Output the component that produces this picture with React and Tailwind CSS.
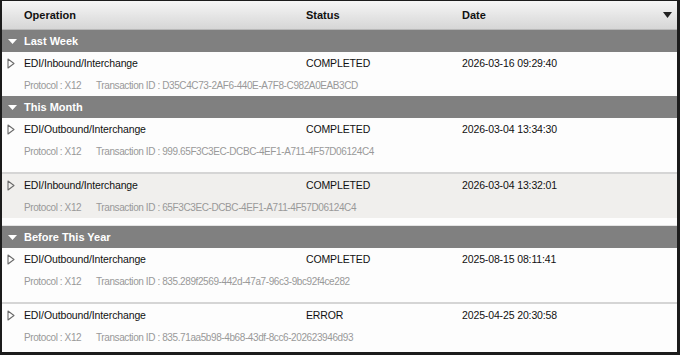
import React from 'react';

const groups = [
  {
    title: 'Last Week',
    rows: [
      {
        op: 'EDI/Inbound/Interchange',
        status: 'COMPLETED',
        date: '2026-03-16 09:29:40',
        tx: 'D35C4C73-2AF6-440E-A7F8-C982A0EAB3CD',
      },
    ],
  },
  {
    title: 'This Month',
    rows: [
      {
        op: 'EDI/Outbound/Interchange',
        status: 'COMPLETED',
        date: '2026-03-04 13:34:30',
        tx: '999.65F3C3EC-DCBC-4EF1-A711-4F57D06124C4',
      },
      {
        op: 'EDI/Inbound/Interchange',
        status: 'COMPLETED',
        date: '2026-03-04 13:32:01',
        tx: '65F3C3EC-DCBC-4EF1-A711-4F57D06124C4',
        shaded: true,
      },
    ],
  },
  {
    title: 'Before This Year',
    rows: [
      {
        op: 'EDI/Outbound/Interchange',
        status: 'COMPLETED',
        date: '2025-08-15 08:11:41',
        tx: '835.289f2569-442d-47a7-96c3-9bc92f4ce282',
      },
      {
        op: 'EDI/Outbound/Interchange',
        status: 'ERROR',
        date: '2025-04-25 20:30:58',
        tx: '835.71aa5b98-4b68-43df-8cc6-202623946d93',
      },
    ],
  },
];

const RowArrow = () => (
  <svg width="8" height="11" viewBox="0 0 8 11" className="block">
    <path d="M1 1 L7 5.5 L1 10 Z" fill="none" stroke="#6b6b6b" strokeWidth="1.1" strokeLinejoin="round" />
  </svg>
);

const GroupArrow = () => (
  <svg width="9" height="5" viewBox="0 0 9 5" className="block">
    <path d="M0 0 L9 0 L4.5 5 Z" fill="#ffffff" />
  </svg>
);

const Row = ({ row, spaced }) => (
  <div
    className={`${row.shaded ? 'bg-[#f0efed]' : 'bg-[#fdfdfd]'} ${
      spaced ? 'border-b-2 border-[#d5d5d5] pb-[10px]' : ''
    }`}
  >
    <div className="flex h-[22px] items-center pt-[1px] text-[10.5px] tracking-[-0.13px] text-[#111]">
      <div className="flex w-[22px] shrink-0 justify-start pl-[5px]">
        <RowArrow />
      </div>
      <div className="w-[282px] shrink-0">{row.op}</div>
      <div className="w-[156px] shrink-0">{row.status}</div>
      <div>{row.date}</div>
    </div>
    <div className="flex h-[22px] items-center pl-[22px] text-[10px] tracking-[-0.4px] text-[#999]">
      <span className="w-[72px] shrink-0">Protocol : X12</span>
      <span>Transaction ID : {row.tx}</span>
    </div>
  </div>
);

export default function App() {
  return (
    <div
      className="h-[355px] w-[680px] overflow-hidden border-[#1c1c1c] border-t-[1px] border-l-2 border-r-[3px] border-b-[3px] bg-[#fdfdfd]"
      style={{ fontFamily: '"Liberation Sans", Arial, sans-serif' }}
    >
      <div className="flex h-[29px] items-center border-b border-[#b8b8b8] bg-gradient-to-b from-[#f6f6f6] to-[#d6d6d6] text-[11px] font-bold text-[#111]">
        <div className="w-[22px] shrink-0" />
        <div className="w-[282px] shrink-0">Operation</div>
        <div className="w-[156px] shrink-0">Status</div>
        <div className="flex-1">Date</div>
        <svg width="9" height="6" viewBox="0 0 9 6" className="mr-[5px] block">
          <path d="M0 0 L9 0 L4.5 6 Z" fill="#222" />
        </svg>
      </div>
      {groups.map((g, gi) => (
        <div key={g.title}>
          <div className="flex h-[22px] items-center bg-[#808080] text-[11px] font-bold text-white">
            <div className="flex w-[22px] shrink-0 pl-[6px]">
              <GroupArrow />
            </div>
            <span>{g.title}</span>
          </div>
          {g.rows.map((r, ri) => (
            <Row key={ri} row={r} spaced={ri !== g.rows.length - 1} />
          ))}
          {gi === 1 && <div className="h-[8px] border-b border-[#e4e4e4] bg-[#fdfdfd]" />}
        </div>
      ))}
    </div>
  );
}
